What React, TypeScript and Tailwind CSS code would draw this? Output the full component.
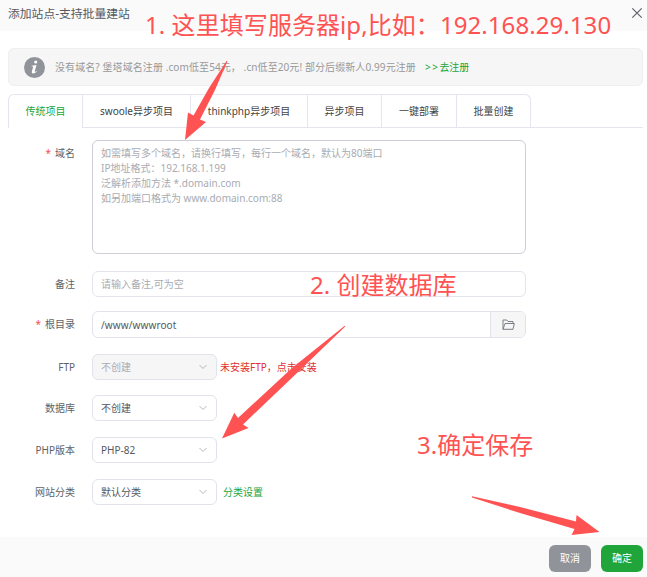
/**
 * App.tsx
 * "Add site" dialog with the numbered setup hints drawn on top of it.
 */

import React, { useState } from "react";

const TABS = [
  { label: "传统项目", width: "w-[74px]" },
  { label: "swoole异步项目", width: "w-[108px]" },
  { label: "thinkphp异步项目", width: "w-[117px]" },
  { label: "异步项目", width: "w-[74px]" },
  { label: "一键部署", width: "w-[75px]" },
  { label: "批量创建", width: "w-[73px]" },
];

const DOMAIN_HINT = [
  "如需填写多个域名，请换行填写，每行一个域名，默认为80端口",
  "IP地址格式：192.168.1.199",
  "泛解析添加方法 *.domain.com",
  "如另加端口格式为 www.domain.com:88",
].join("\n");

interface RowProps {
  label: string;
  required?: boolean;
  className: string;
  children: React.ReactNode;
}

function Row({ label, required, className, children }: RowProps) {
  return (
    <div className={`flex ${className}`}>
      <label className="mr-[17px] flex h-[26px] w-[75px] shrink-0 items-center justify-end whitespace-nowrap text-[#606266]">
        {required && <span className="mr-1 text-[#f05050]">*</span>}
        {label}
      </label>
      {children}
    </div>
  );
}

function Select({ value, disabled }: { value: string; disabled?: boolean }) {
  return (
    <button
      type="button"
      disabled={disabled}
      className={`flex h-[26px] w-[125px] shrink-0 items-center justify-between rounded-md border border-[#e1e3ea] px-2 ${
        disabled ? "bg-[#f6f6f7] text-[#a8abb2]" : "bg-white text-[#55585e]"
      }`}
    >
      {value}
      <svg viewBox="0 0 10 6" className="h-[6px] w-[10px]" fill="none" stroke="#b4b7be">
        <path d="M1.5 1 L5 4.5 L8.5 1" />
      </svg>
    </button>
  );
}

export default function App() {
  const [active, setActive] = useState(0);
  const [domains, setDomains] = useState("");
  const [note, setNote] = useState("");
  const [root, setRoot] = useState("/www/wwwroot");

  return (
    <div className="relative flex h-[577px] w-[647px] flex-col overflow-hidden bg-white font-['Noto_Sans','Noto_Sans_CJK_SC',sans-serif] text-[10px] leading-[15px] text-[#55585e]">
      {/* Title bar */}
      <header className="flex h-[31px] shrink-0 justify-between bg-[#fafafa] pl-2 pr-1">
        <h1 className="mt-[4px] text-[11.8px] leading-[18px] text-[#55585e]">
          添加站点-支持批量建站
        </h1>
        <button type="button" aria-label="关闭" className="mt-[7px] h-[12px] w-[12px]">
          <svg viewBox="0 0 12 12" fill="none" stroke="#5f6266" strokeWidth="1.2">
            <path d="M1.3 1.3 L10.7 10.7 M10.7 1.3 L1.3 10.7" />
          </svg>
        </button>
      </header>

      {/* Domain offer */}
      <div className="ml-2 mt-[17px] flex h-[38px] w-[635px] shrink-0 items-center rounded-md border border-[#eeeef3] bg-[#f6f6f7] pl-[15px] text-[#999]">
        <svg viewBox="0 0 20 20" className="mr-[10px] h-[21px] w-[21px] shrink-0">
          <circle cx="10" cy="10" r="10" fill="#909399" />
          <circle cx="11.2" cy="4.8" r="1.5" fill="#fff" />
          <path
            d="M7.3 8.3 L11.9 7.5 L10.2 13.8 Q10 14.8 11.8 13.4 L12.2 13.9 Q10.2 16 8.5 15.8 Q7 15.5 7.5 13.8 L8.8 9.1 L7.2 9 Z"
            fill="#fff"
          />
        </svg>
        <span className="whitespace-nowrap tracking-[0.09px]">
          没有域名? 堡塔域名注册 .com低至54元， .cn低至20元! 部分后缀新人0.99元注册
        </span>
        <a className="ml-[9px] whitespace-nowrap text-[#20a53a]">
          <span className="tracking-[1.5px]">&gt;&gt;</span>去注册
        </a>
      </div>

      {/* Project tabs */}
      <nav className="ml-2 mt-2 flex h-[34px] w-[635px] shrink-0">
        <div className="flex overflow-hidden rounded-t-md border-r border-t border-l border-[#e4e5ee]">
          {TABS.map((tab, i) => (
            <button
              key={tab.label}
              type="button"
              onClick={() => setActive(i)}
              className={`${tab.width} shrink-0 whitespace-nowrap border-[#e4e5ee] ${
                i < TABS.length - 1 ? "border-r" : ""
              } ${i === active ? "text-[#20a53a]" : "border-b text-[#444]"}`}
            >
              {tab.label}
            </button>
          ))}
        </div>
        <div className="flex-1 border-b border-[#e4e5ee]" />
      </nav>

      {/* Form */}
      <form className="flex-1">
        <Row label="域名" required className="mt-[12px]">
          <textarea
            value={domains}
            onChange={(e) => setDomains(e.target.value)}
            placeholder={DOMAIN_HINT}
            className="h-[114px] w-[434px] resize-none rounded-md border border-[#cdced6] px-2 pb-1 pt-[5px] outline-none placeholder:text-[#a8abb2]"
          />
        </Row>
        <Row label="备注" className="mt-[17px]">
          <input
            value={note}
            onChange={(e) => setNote(e.target.value)}
            placeholder="请输入备注,可为空"
            className="h-[26px] w-[434px] rounded-md border border-[#e4e5ec] px-2 outline-none placeholder:text-[#a8abb2]"
          />
        </Row>
        <Row label="根目录" required className="mt-[14px]">
          <div className="flex h-[27px] w-[434px] overflow-hidden rounded-md border border-[#e1e3ea]">
            <input
              value={root}
              onChange={(e) => setRoot(e.target.value)}
              className="min-w-0 flex-1 px-2 pt-px tracking-[0.1px] outline-none"
            />
            <button
              type="button"
              aria-label="选择目录"
              className="flex w-[35px] items-center justify-center border-l border-[#e1e3ea] bg-[#f6f6f7]"
            >
              <svg viewBox="0 0 13 11" className="h-[11px] w-[13px]" fill="none" stroke="#7c7f85">
                <path d="M1 10.3 V1 H4.8 L6 2.5 H11 V4.5 M1 10.3 L3 4.5 H12.3 L11 10.3 Z" />
              </svg>
            </button>
          </div>
        </Row>
        <Row label="FTP" className="mt-[16px]">
          <Select value="不创建" disabled />
          <a className="ml-[3px] self-center whitespace-nowrap text-[#e03030]">
            未安装FTP，点击安装
          </a>
        </Row>
        <Row label="数据库" className="mt-[15px]">
          <Select value="不创建" />
        </Row>
        <Row label="PHP版本" className="mt-[16px]">
          <Select value="PHP-82" />
        </Row>
        <Row label="网站分类" className="mt-[16px]">
          <Select value="默认分类" />
          <a className="ml-[6px] self-center text-[#20a53a]">分类设置</a>
        </Row>
      </form>

      {/* Actions */}
      <footer className="flex h-[40px] shrink-0 justify-end gap-[10px] bg-[#fafafa] pr-1 pt-2 text-white">
        <button type="button" className="h-[27px] w-[42px] rounded-md bg-[#909399]">
          取消
        </button>
        <button type="button" className="h-[27px] w-[42px] rounded-md bg-[#20a53a]">
          确定
        </button>
      </footer>

      {/* Hints over the dialog */}
      <div className="pointer-events-none absolute inset-0 whitespace-nowrap text-[24px] leading-[32px] text-[#ff5252]">
        <span className="absolute left-[145px] top-[9px] tracking-[0.07px]">
          1. 这里填写服务器ip,比如：192.168.29.130
        </span>
        <span className="absolute left-[310px] top-[269px]">2. 创建数据库</span>
        <span className="absolute left-[417px] top-[429px]">3.确定保存</span>
        <svg viewBox="0 0 647 577" className="absolute inset-0 h-[577px] w-[647px]" fill="#ff5252">
          <path d="M227.5 61 L215 90 L200 119.5 L206 122 L185 140 L188 112.5 L193.5 115.5 L209 88 L226.5 61 Z" />
          <path d="M345.5 326.3 L297 373 L243 424.5 L248.5 428 L222 438.5 L234.3 412.7 L238 418 L292 368 L344.7 325.7 Z" />
          <path d="M472 496.2 L520 507 L576 521.5 L576.5 515 L599.5 532 L571.5 535 L574.5 529 L520 513 L472 497.5 Z" />
        </svg>
      </div>
    </div>
  );
}
